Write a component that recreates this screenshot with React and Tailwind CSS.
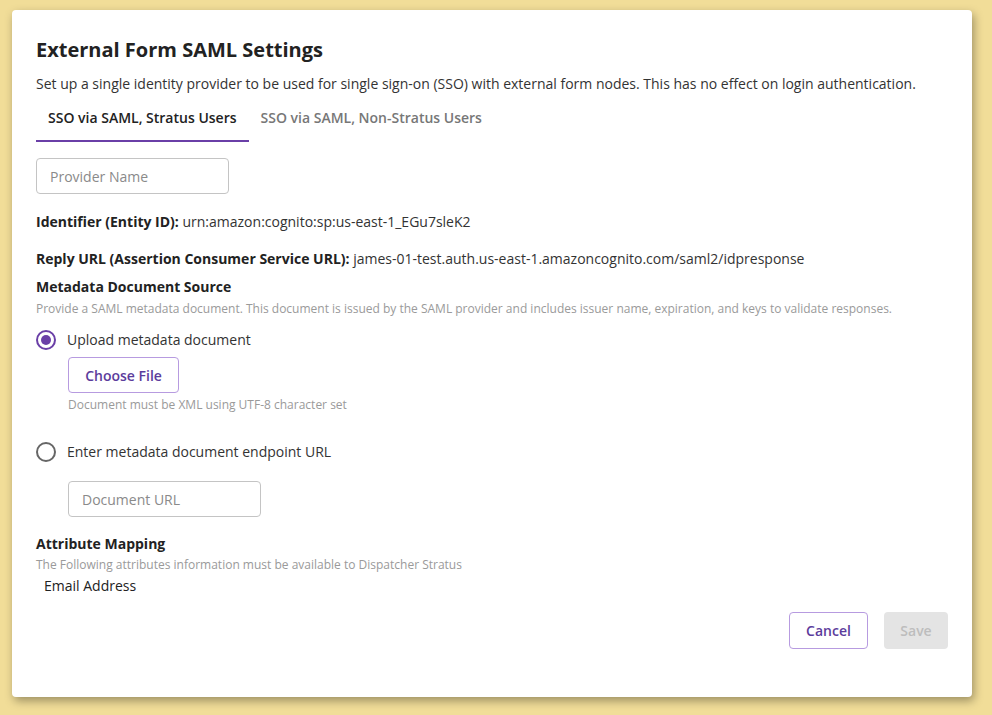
import React, { useState } from "react";

const Radio = ({ checked, onClick, label }) => (
  <button type="button" onClick={onClick} className="flex items-center gap-[11px] text-left">
    <span
      className={`flex h-5 w-5 items-center justify-center rounded-full border-2 ${
        checked ? "border-[#6a3fa7]" : "border-[#666]"
      }`}
    >
      {checked && <span className="h-2.5 w-2.5 rounded-full bg-[#6a3fa7]" />}
    </span>
    <span className="text-[14px] text-[#333]">{label}</span>
  </button>
);

const App = () => {
  const [tab, setTab] = useState(0);
  const [source, setSource] = useState("upload");

  const tabs = ["SSO via SAML, Stratus Users", "SSO via SAML, Non-Stratus Users"];

  return (
    <div
      className="min-h-[715px] bg-[#f1dd98] pl-3 pr-5 pt-[10px] pb-[18px]"
      style={{ fontFamily: '"Open Sans", "Noto Sans", sans-serif' }}
    >
      <div className="h-[687px] rounded bg-white px-6 pt-7 shadow-[2px_4px_10px_rgba(0,0,0,0.35)] flex flex-col">
        <h1 className="text-[20px] font-bold leading-6 text-[#222]">External Form SAML Settings</h1>
        <p className="mt-[11px] text-[14px] text-[#333]">
          Set up a single identity provider to be used for single sign-on (SSO) with external form nodes. This has no
          effect on login authentication.
        </p>

        <div className="mt-[2px] flex">
          {tabs.map((t, i) => (
            <button
              key={t}
              type="button"
              onClick={() => setTab(i)}
              className={`px-3 pt-[11px] pb-[12px] text-[14px] font-semibold border-b-2 ${
                tab === i ? "border-[#6a3fa7] text-[#222]" : "border-transparent text-[#777]"
              }`}
            >
              {t}
            </button>
          ))}
        </div>

        <input
          placeholder="Provider Name"
          className="mt-4 h-9 w-[193px] rounded border border-[#c4c4c4] px-[13px] text-[14px] text-[#333] placeholder:text-[#8a8a8a] outline-none"
        />

        <p className="mt-[17px] text-[14px] text-[#333]">
          <span className="font-bold text-[#222]">Identifier (Entity ID):</span> urn:amazon:cognito:sp:us-east-1_EGu7sleK2
        </p>
        <p className="mt-[16px] text-[14px] text-[#333]">
          <span className="font-bold text-[#222]">Reply URL (Assertion Consumer Service URL):</span>{" "}
          james-01-test.auth.us-east-1.amazoncognito.com/saml2/idpresponse
        </p>

        <h2 className="mt-[7px] text-[14px] font-bold text-[#222]">Metadata Document Source</h2>
        <p className="mt-[4px] text-[12px] leading-4 text-[#9a9a9a]">
          Provide a SAML metadata document. This document is issued by the SAML provider and includes issuer name,
          expiration, and keys to validate responses.
        </p>

        <div className="mt-[12px]">
          <Radio checked={source === "upload"} onClick={() => setSource("upload")} label="Upload metadata document" />
        </div>
        <div className="ml-8 mt-[7px]">
          <button
            type="button"
            className="h-9 w-[111px] rounded border border-[#b79be0] text-[14px] font-semibold text-[#5c3c9c]"
          >
            Choose File
          </button>
          <p className="mt-[4px] text-[12px] leading-4 text-[#9a9a9a]">Document must be XML using UTF-8 character set</p>
        </div>

        <div className="mt-[28px]">
          <Radio checked={source === "url"} onClick={() => setSource("url")} label="Enter metadata document endpoint URL" />
        </div>
        <div className="ml-8 mt-[19px]">
          <input
            placeholder="Document URL"
            className="h-9 w-[193px] rounded border border-[#c4c4c4] px-[13px] text-[14px] text-[#333] placeholder:text-[#8a8a8a] outline-none"
          />
        </div>

        <h2 className="mt-[16px] text-[14px] font-bold text-[#222]">Attribute Mapping</h2>
        <p className="mt-[3px] text-[12px] leading-4 text-[#9a9a9a]">
          The Following attributes information must be available to Dispatcher Stratus
        </p>
        <p className="ml-2 mt-[2px] text-[14px] text-[#222]">Email Address</p>

        <div className="mt-[16px] flex justify-end gap-4">
          <button
            type="button"
            className="h-[37px] w-[79px] rounded border border-[#b79be0] text-[14px] font-semibold text-[#5c3c9c]"
          >
            Cancel
          </button>
          <button
            type="button"
            disabled
            className="h-[37px] w-[64px] rounded bg-[#e4e4e4] text-[14px] font-semibold text-[#bdbdbd]"
          >
            Save
          </button>
        </div>
      </div>
    </div>
  );
};

export default App;
